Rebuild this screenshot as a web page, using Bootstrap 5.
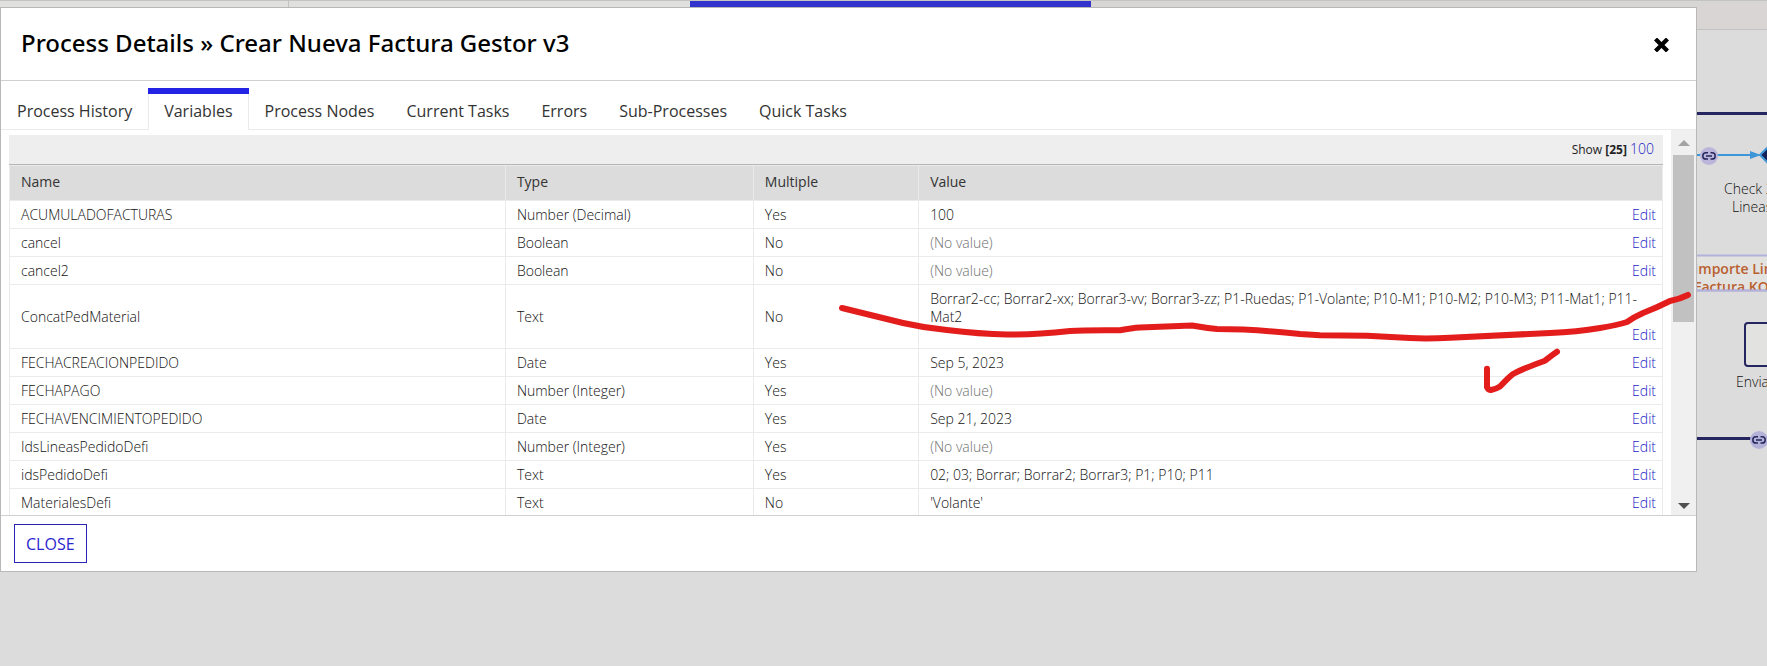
<!DOCTYPE html>
<html lang="en">
<head>
<meta charset="utf-8">
<meta name="viewport" content="width=device-width, initial-scale=1">
<title>Process Details</title>
<link href="https://cdn.jsdelivr.net/npm/bootstrap@5.3.0/dist/css/bootstrap.min.css" rel="stylesheet">
<style>
body{background:#dcdcdc;font-family:"Open Sans","Noto Sans",sans-serif;font-size:14px;line-height:18px;color:#333;overflow:hidden}
a{color:#221cc4;text-decoration:none}
.backbar{height:7px;border-top:1px solid #c4c3c3;background:#e0e0df}
.backbar .seg-a{width:289px;border-right:1px solid #c4c3c3}
.backbar .seg-b{width:401px}
.backbar .seg-on{width:401px;background:#3232cd}
.backbar .seg-rest{background:#d8d6d5}
.panel{border:1px solid #b8b8b8;background:#fff}
.panel-top{height:73px;padding:0 24px 0 20px;border-bottom:1px solid #d0d0d0}
.panel-top h1{font-family:"Noto Sans","Open Sans",sans-serif;font-size:24px;line-height:32px;font-weight:500;color:#000;padding-bottom:2px}
.x-btn{border:0;background:none;padding:2px 3px 0}
.tabs{padding-top:7px;border-bottom:1px solid #ebebeb}
.tabs .nav-link{font-size:16px;line-height:24px;font-weight:400;color:#333;border:0;border-top:6px solid transparent;border-radius:0;padding:5px 16px 6px;margin-bottom:-1px}
.tabs .nav-link.active{border-top-color:#2323e6;background:#fff;box-shadow:inset 1px 0 #ebebeb,inset -1px 0 #ebebeb;padding-bottom:7px}
.scroller{height:385px;overflow:hidden}
.sheet{padding:5px 8px 0}
.pager{height:30px;background:#eee;border-bottom:1px solid #b5b5b5;padding-right:9px;font-size:12px;color:#222}
.pager a{font-size:14px;font-weight:300}
.vars{table-layout:fixed;width:100%;border-collapse:collapse;font-weight:300}
.vars th,.vars td{border:1px solid #ebebeb;padding:5px 6px 4px 11px;vertical-align:middle}
.vars th{background:#dcdcdc;font-weight:500;padding:7px 11px 9px}
.vars td{color:#111}
.vars .none{color:#707070}
.sbar{width:25px;background:#f0f0f0;padding:10px 2px 6px}
.sbar .thumb{height:167px;background:#c1c1c1;margin-top:9px}
.panel-foot{border-top:1px solid #d0d0d0;padding:8px 13px}
.close-btn{border:1px solid #2a25b0;border-radius:0;background:#fff;color:#2a25d0;font-size:16px;line-height:24px;font-weight:400;padding:7px 11px 6px}
.side{width:70px;margin-top:-1px}
.ink{position:absolute;right:0;top:280px;pointer-events:none}
</style>
</head>
<body>
<div class="backbar d-flex"><div class="seg-a"></div><div class="seg-b"></div><div class="seg-on"></div><div class="seg-rest flex-grow-1"></div></div>
<div class="d-flex align-items-start">
<main class="panel flex-grow-1 position-relative">
  <header class="panel-top d-flex justify-content-between align-items-center">
    <h1 class="m-0">Process Details » Crear Nueva Factura Gestor v3</h1>
    <button class="x-btn d-flex" type="button" aria-label="Close"><svg width="15" height="14" viewBox="0 0 15 14"><path d="M3 2.5 12 11.5M12 2.5 3 11.5" stroke="#000" stroke-width="4.2" stroke-linecap="square"/></svg></button>
  </header>
  <ul class="nav tabs">
    <li class="nav-item"><a class="nav-link" href="#">Process History</a></li>
    <li class="nav-item"><a class="nav-link active" href="#">Variables</a></li>
    <li class="nav-item"><a class="nav-link" href="#">Process Nodes</a></li>
    <li class="nav-item"><a class="nav-link" href="#">Current Tasks</a></li>
    <li class="nav-item"><a class="nav-link" href="#">Errors</a></li>
    <li class="nav-item"><a class="nav-link" href="#">Sub-Processes</a></li>
    <li class="nav-item"><a class="nav-link" href="#">Quick Tasks</a></li>
  </ul>
  <div class="scroller d-flex">
    <div class="sheet flex-grow-1">
      <div class="pager d-flex justify-content-end align-items-center"><span>Show <b>[25]</b> <a href="#">100</a></span></div>
      <table class="vars">
        <colgroup><col style="width:30%"><col style="width:15%"><col style="width:10%"><col style="width:45%"></colgroup>
        <thead><tr><th>Name</th><th>Type</th><th>Multiple</th><th>Value</th></tr></thead>
        <tbody>
        <tr><td>ACUMULADOFACTURAS</td><td>Number (Decimal)</td><td>Yes</td><td><div class="d-flex flex-wrap"><span>100</span><a class="ms-auto" href="#">Edit</a></div></td></tr>
        <tr><td>cancel</td><td>Boolean</td><td>No</td><td><div class="d-flex flex-wrap"><span class="none">(No value)</span><a class="ms-auto" href="#">Edit</a></div></td></tr>
        <tr><td>cancel2</td><td>Boolean</td><td>No</td><td><div class="d-flex flex-wrap"><span class="none">(No value)</span><a class="ms-auto" href="#">Edit</a></div></td></tr>
        <tr><td>ConcatPedMaterial</td><td>Text</td><td>No</td><td><div class="d-flex flex-wrap"><span>Borrar2-cc; Borrar2-xx; Borrar3-vv; Borrar3-zz; P1-Ruedas; P1-Volante; P10-M1; P10-M2; P10-M3; P11-Mat1; P11-Mat2</span><a class="ms-auto" href="#">Edit</a></div></td></tr>
        <tr><td>FECHACREACIONPEDIDO</td><td>Date</td><td>Yes</td><td><div class="d-flex flex-wrap"><span>Sep 5, 2023</span><a class="ms-auto" href="#">Edit</a></div></td></tr>
        <tr><td>FECHAPAGO</td><td>Number (Integer)</td><td>Yes</td><td><div class="d-flex flex-wrap"><span class="none">(No value)</span><a class="ms-auto" href="#">Edit</a></div></td></tr>
        <tr><td>FECHAVENCIMIENTOPEDIDO</td><td>Date</td><td>Yes</td><td><div class="d-flex flex-wrap"><span>Sep 21, 2023</span><a class="ms-auto" href="#">Edit</a></div></td></tr>
        <tr><td>IdsLineasPedidoDefi</td><td>Number (Integer)</td><td>Yes</td><td><div class="d-flex flex-wrap"><span class="none">(No value)</span><a class="ms-auto" href="#">Edit</a></div></td></tr>
        <tr><td>idsPedidoDefi</td><td>Text</td><td>Yes</td><td><div class="d-flex flex-wrap"><span>02; 03; Borrar; Borrar2; Borrar3; P1; P10; P11</span><a class="ms-auto" href="#">Edit</a></div></td></tr>
        <tr><td>MaterialesDefi</td><td>Text</td><td>No</td><td><div class="d-flex flex-wrap"><span>'Volante'</span><a class="ms-auto" href="#">Edit</a></div></td></tr>
        </tbody>
      </table>
    </div>
    <div class="sbar d-flex flex-column flex-shrink-0">
      <svg class="mx-auto" width="12" height="6"><path d="M0 6 6 0 12 6z" fill="#a3a3a3"/></svg>
      <div class="thumb"></div>
      <svg class="mx-auto mt-auto" width="12" height="6"><path d="M0 0H12L6 6z" fill="#505050"/></svg>
    </div>
  </div>
  <footer class="panel-foot"><button class="btn close-btn" type="button">CLOSE</button></footer>
  <!-- hand-drawn marker strokes -->
  <svg class="ink" width="860" height="120" viewBox="836 288 860 120" fill="none" stroke="#e31d1c" stroke-width="6" stroke-linecap="round" stroke-linejoin="round">
    <path d="M842 308Q870 315 903 323Q925 328 947 330Q980 334 1007 334.500Q1033 335 1070 331Q1085 330 1120 330.300Q1132 328 1140 327.500L1192 325.500Q1206 328 1217 329Q1253 329 1300 334L1320 335.300 1367 335.700 1410 338Q1427 339 1450 337.700L1550 333Q1577 332 1600 328Q1618 325 1627 322Q1634 317 1643 313Q1656 308 1670 301Q1680 299 1688 295"/>
    <path d="M1487 368.700V387Q1488 390 1491 390Q1496 389 1500 386.500Q1510 376 1513 374Q1522 369 1545 360.700Q1552 355 1557 351.700"/>
  </svg>
</main>
<!-- visible edge of the process diagram -->
<aside class="side flex-shrink-0">
  <svg class="d-block" width="70" height="480" viewBox="1697 6 70 480" font-family="Open Sans, Noto Sans, sans-serif" font-size="14">
    <rect x="1697" y="6" width="70" height="23" fill="#d8d5d4"/><path d="M1697 29.500h70" stroke="#c4c3c3"/>
    <path d="M1697 113.500h70" stroke="#252560" stroke-width="3"/>
    <path d="M1697 155h55" stroke="#3c96d8" stroke-width="2"/><path d="M1750 151l11 4-11 4z" fill="#3c96d8"/>
    <path d="M1760 155l12-12v24z" fill="#14215a" stroke="#3c96d8" stroke-width="2"/>
    <circle cx="1709" cy="156" r="9" fill="#bbb5dc"/>
    <g id="chain" fill="none" stroke="#25285c" stroke-width="1.500"><path d="M1708 152.700h-2a3.200 3.200 0 0 0 0 6.400h2M1710.500 152.700h1.500a3.200 3.200 0 0 1 0 6.400h-1.500M1706 155.900h6"/></g>
    <g fill="#111" font-weight="300"><text x="1724" y="194">Check 2</text><text x="1732" y="212">Lineas</text><text x="1736" y="387">Enviar</text></g>
    <rect x="1690" y="255.500" width="90" height="35" fill="#e2e2e1" stroke="#b3b2da" stroke-width="2"/>
    <svg x="1697" y="256" width="70" height="34" viewBox="1697 256 70 34"><g fill="#b9602f" font-weight="600"><text x="1694" y="274">Importe Lin</text><text x="1694" y="292">Factura KO</text></g></svg>
    <path d="M1697 290.500h70" stroke="#b3b2da" stroke-width="2"/>
    <rect x="1745" y="323" width="40" height="43" rx="3" fill="#e2e2e1" stroke="#252560" stroke-width="2"/>
    <path d="M1697 438.500h55" stroke="#252560" stroke-width="3"/>
    <circle cx="1759" cy="440" r="9" fill="#b5b2da"/><use href="#chain" x="50" y="284"/>
  </svg>
</aside>
</div>
<script src="https://cdn.jsdelivr.net/npm/bootstrap@5.3.0/dist/js/bootstrap.bundle.min.js"></script>
</body>
</html>
